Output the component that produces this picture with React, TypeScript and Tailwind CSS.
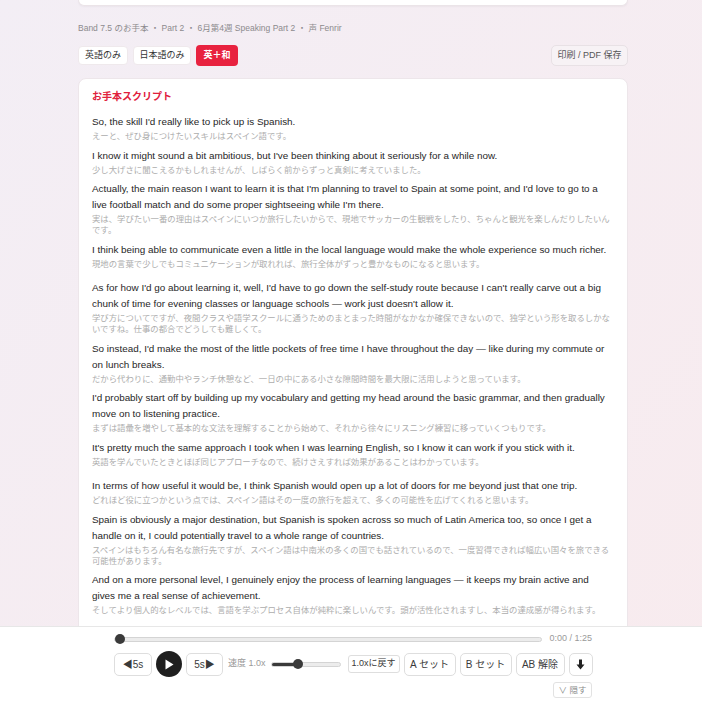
import React from "react";

type Line = { en: string; ja: string };

const script: Line[][] = [
  [
    {
      en: "So, the skill I'd really like to pick up is Spanish.",
      ja: "えーと、ぜひ身につけたいスキルはスペイン語です。",
    },
    {
      en: "I know it might sound a bit ambitious, but I've been thinking about it seriously for a while now.",
      ja: "少し大げさに聞こえるかもしれませんが、しばらく前からずっと真剣に考えていました。",
    },
    {
      en: "Actually, the main reason I want to learn it is that I'm planning to travel to Spain at some point, and I'd love to go to a live football match and do some proper sightseeing while I'm there.",
      ja: "実は、学びたい一番の理由はスペインにいつか旅行したいからで、現地でサッカーの生観戦をしたり、ちゃんと観光を楽しんだりしたいんです。",
    },
    {
      en: "I think being able to communicate even a little in the local language would make the whole experience so much richer.",
      ja: "現地の言葉で少しでもコミュニケーションが取れれば、旅行全体がずっと豊かなものになると思います。",
    },
  ],
  [
    {
      en: "As for how I'd go about learning it, well, I'd have to go down the self-study route because I can't really carve out a big chunk of time for evening classes or language schools — work just doesn't allow it.",
      ja: "学び方についてですが、夜間クラスや語学スクールに通うためのまとまった時間がなかなか確保できないので、独学という形を取るしかないですね。仕事の都合でどうしても難しくて。",
    },
    {
      en: "So instead, I'd make the most of the little pockets of free time I have throughout the day — like during my commute or on lunch breaks.",
      ja: "だから代わりに、通勤中やランチ休憩など、一日の中にある小さな隙間時間を最大限に活用しようと思っています。",
    },
    {
      en: "I'd probably start off by building up my vocabulary and getting my head around the basic grammar, and then gradually move on to listening practice.",
      ja: "まずは語彙を増やして基本的な文法を理解することから始めて、それから徐々にリスニング練習に移っていくつもりです。",
    },
    {
      en: "It's pretty much the same approach I took when I was learning English, so I know it can work if you stick with it.",
      ja: "英語を学んでいたときとほぼ同じアプローチなので、続けさえすれば効果があることはわかっています。",
    },
  ],
  [
    {
      en: "In terms of how useful it would be, I think Spanish would open up a lot of doors for me beyond just that one trip.",
      ja: "どれほど役に立つかという点では、スペイン語はその一度の旅行を超えて、多くの可能性を広げてくれると思います。",
    },
    {
      en: "Spain is obviously a major destination, but Spanish is spoken across so much of Latin America too, so once I get a handle on it, I could potentially travel to a whole range of countries.",
      ja: "スペインはもちろん有名な旅行先ですが、スペイン語は中南米の多くの国でも話されているので、一度習得できれば幅広い国々を旅できる可能性があります。",
    },
    {
      en: "And on a more personal level, I genuinely enjoy the process of learning languages — it keeps my brain active and gives me a real sense of achievement.",
      ja: "そしてより個人的なレベルでは、言語を学ぶプロセス自体が純粋に楽しいんです。頭が活性化されますし、本当の達成感が得られます。",
    },
  ],
];

const font = {
  fontFamily: '"Liberation Sans", "Noto Sans CJK JP", sans-serif',
};

function CtrlButton({ children, w }: { children: React.ReactNode; w: string }) {
  return (
    <button
      className={`${w} h-[23px] shrink-0 rounded-[5px] border border-[#dedede] bg-white text-[10px] text-[#3a3a3a] flex items-center justify-center`}
    >
      {children}
    </button>
  );
}

export default function App() {
  return (
    <div
      className="h-screen flex flex-col bg-gradient-to-br from-[#f3eef5] to-[#f8ebee] overflow-hidden"
      style={font}
    >
      <main className="flex-1 overflow-hidden">
        <div className="ml-[78px] w-[550px]">
          <div className="h-[6px] bg-white rounded-b-[8px] border-b border-x border-[#ebe4e8] shadow-[0_1px_2px_rgba(0,0,0,0.04)]" />

          <p className="mt-[16px] text-[8.5px] leading-[12px] text-[#8c8a8d]">
            Band 7.5 のお手本 ・ Part 2 ・ 6月第4週 Speaking Part 2 ・ 声 Fenrir
          </p>

          <div className="mt-[11px] flex items-center">
            <div className="flex items-center gap-[5px]">
              <button className="w-[50px] h-[19px] rounded-[4px] bg-white border border-[#efe9ec] text-[9px] text-[#333]">
                英語のみ
              </button>
              <button className="w-[58px] h-[19px] rounded-[4px] bg-white border border-[#efe9ec] text-[9px] text-[#333]">
                日本語のみ
              </button>
              <button className="w-[42px] h-[21px] rounded-[4px] bg-[#e8223f] text-[9px] font-bold text-white">
                英＋和
              </button>
            </div>
            <button className="ml-auto w-[77px] h-[21px] rounded-[5px] border border-[#e8e1e5] bg-[#f7f2f5] text-[9px] text-[#555]">
              印刷 / PDF 保存
            </button>
          </div>

          <section className="mt-[12px] bg-white rounded-[8px] border border-[#ede6ea] px-[13px] pt-[11px] pb-6">
            <h2 className="text-[10px] leading-[14px] font-bold text-[#e0203c]">
              お手本スクリプト
            </h2>
            <div className="mt-[10px] flex flex-col gap-[10.5px]">
              {script.map((para, i) => (
                <div key={i} className="flex flex-col gap-[5.5px]">
                  {para.map((s, j) => (
                    <div key={j}>
                      <p className="text-[9.9px] leading-[16px] text-[#262626]">
                        {s.en}
                      </p>
                      <p className="mt-[1px] text-[8.4px] leading-[11px] text-[#adadad]">
                        {s.ja}
                      </p>
                    </div>
                  ))}
                </div>
              ))}
            </div>
          </section>
        </div>
      </main>

      <footer className="h-[94px] shrink-0 bg-white border-t border-[#e7e7e7]">
        <div className="ml-[114px] w-[478px] pt-[7px]">
          <div className="flex items-center gap-[6px] h-[10px]">
            <div className="relative flex-1 h-[5px] rounded-full bg-[#ececec] border border-[#d4d4d4]">
              <span className="absolute left-0 top-1/2 -translate-y-1/2 w-[10px] h-[10px] rounded-full bg-[#3a3a3a]" />
            </div>
            <span className="w-[44px] text-right text-[9px] text-[#9a9a9a]">
              0:00 / 1:25
            </span>
          </div>

          <div className="mt-[7px] flex items-center gap-[4px]">
            <CtrlButton w="w-[38px]">◀5s</CtrlButton>
            <button className="w-[26px] h-[26px] shrink-0 rounded-full bg-[#1f1f1f] flex items-center justify-center">
              <svg width="10" height="11" viewBox="0 0 10 11">
                <path d="M1.5 0.5 L9.5 5.5 L1.5 10.5 Z" fill="#fff" />
              </svg>
            </button>
            <CtrlButton w="w-[37px]">5s▶</CtrlButton>
            <span className="shrink-0 text-[9px] text-[#9a9a9a] ml-[1px]">
              速度 1.0x
            </span>
            <div className="relative w-[70px] h-[5px] shrink-0 ml-[1px] rounded-full bg-[#ececec] border border-[#d4d4d4]">
              <div className="absolute left-0 top-0 h-full w-[26px] rounded-full bg-[#3a3a3a]" />
              <span className="absolute left-[21px] top-1/2 -translate-y-1/2 w-[10px] h-[10px] rounded-full bg-[#3a3a3a]" />
            </div>
            <button className="ml-[3px] w-[52px] h-[18px] shrink-0 rounded-[3px] border border-[#dedede] bg-white text-[9px] text-[#3a3a3a]">
              1.0xに戻す
            </button>
            <CtrlButton w="w-[52px]">A セット</CtrlButton>
            <CtrlButton w="w-[52px]">B セット</CtrlButton>
            <CtrlButton w="w-[49px]">AB 解除</CtrlButton>
            <CtrlButton w="w-[24px]">
              <svg width="9" height="11" viewBox="0 0 9 11">
                <path d="M3 0.5 H6 V5.5 H8.5 L4.5 10.5 L0.5 5.5 H3 Z" fill="#222" />
              </svg>
            </CtrlButton>
          </div>

          <div className="mt-[5px] flex justify-end">
            <button className="w-[39px] h-[16px] rounded-[3px] border border-[#e2e2e2] bg-white text-[8.5px] text-[#8a8a8a]">
              ∨ 隠す
            </button>
          </div>
        </div>
      </footer>
    </div>
  );
}
